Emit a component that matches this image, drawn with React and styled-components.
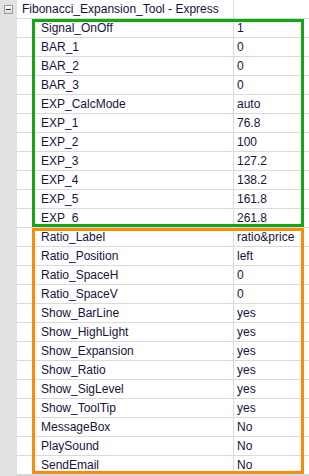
import React from 'react';
import styled, { createGlobalStyle } from 'styled-components';

const Global = createGlobalStyle`
  html, body { margin: 0; padding: 0; background: #ffffff; }
  body { font-family: "Liberation Sans", Arial, sans-serif; }
`;

const Grid = styled.div`
  display: flex;
  width: 309px;
  height: 476px;
  overflow: hidden;
  font-size: 12px;
  color: #14143c;
  background: #ffffff;
`;

const Gutter = styled.div`
  width: 17px;
  flex: none;
  background: #e2e2e2;
  position: relative;
`;

const Toggle = styled.div`
  position: absolute;
  left: 4px;
  top: 5px;
  width: 7px;
  height: 7px;
  border: 1px solid #9a9a9a;
  background: linear-gradient(#fafafa, #dcdcdc);
  display: flex;
  align-items: center;
  justify-content: center;

  &::after {
    content: '';
    width: 5px;
    height: 1px;
    background: #3a3a3a;
  }
`;

const Body = styled.div`
  flex: 1;
  display: flex;
  flex-direction: column;
  border-bottom: 1px solid #d4d4d4;
`;

const Row = styled.div`
  display: grid;
  grid-template-columns: ${p => (p.$header ? '216px 1fr' : '15px 201px 1fr')};
  height: 18px;
  border-bottom: 1px solid #dadada;
  white-space: nowrap;
`;

const Indent = styled.div``;

const Name = styled.div`
  padding: 1px 0 0 ${p => (p.$header ? '5px' : '9px')};
  line-height: 17px;
`;

const Value = styled.div`
  border-left: 1px solid #dadada;
  padding: 1px 0 0 3px;
  line-height: 17px;
  overflow: hidden;
`;

const Group = styled.div`
  position: relative;
`;

const Outline = styled.div`
  position: absolute;
  left: 15px;
  right: 5px;
  top: 0;
  bottom: 1px;
  border: 3px solid ${p => p.$color};
  pointer-events: none;
`;

const signalRows = [
  ['Signal_OnOff', '1'],
  ['BAR_1', '0'],
  ['BAR_2', '0'],
  ['BAR_3', '0'],
  ['EXP_CalcMode', 'auto'],
  ['EXP_1', '76.8'],
  ['EXP_2', '100'],
  ['EXP_3', '127.2'],
  ['EXP_4', '138.2'],
  ['EXP_5', '161.8'],
  ['EXP_6', '261.8'],
];

const displayRows = [
  ['Ratio_Label', 'ratio&price'],
  ['Ratio_Position', 'left'],
  ['Ratio_SpaceH', '0'],
  ['Ratio_SpaceV', '0'],
  ['Show_BarLine', 'yes'],
  ['Show_HighLight', 'yes'],
  ['Show_Expansion', 'yes'],
  ['Show_Ratio', 'yes'],
  ['Show_SigLevel', 'yes'],
  ['Show_ToolTip', 'yes'],
  ['MessageBox', 'No'],
  ['PlaySound', 'No'],
  ['SendEmail', 'No'],
];

function PropGroup({ rows, color }) {
  return (
    <Group>
      {rows.map(([name, value]) => (
        <Row key={name}>
          <Indent />
          <Name>{name}</Name>
          <Value>{value}</Value>
        </Row>
      ))}
      <Outline $color={color} />
    </Group>
  );
}

export default function App() {
  return (
    <>
      <Global />
      <Grid>
        <Gutter>
          <Toggle />
        </Gutter>
        <Body>
          <Row $header>
            <Name $header>Fibonacci_Expansion_Tool - Express</Name>
            <Value />
          </Row>
          <PropGroup rows={signalRows} color="#12a812" />
          <PropGroup rows={displayRows} color="#ff8a0a" />
        </Body>
      </Grid>
    </>
  );
}
